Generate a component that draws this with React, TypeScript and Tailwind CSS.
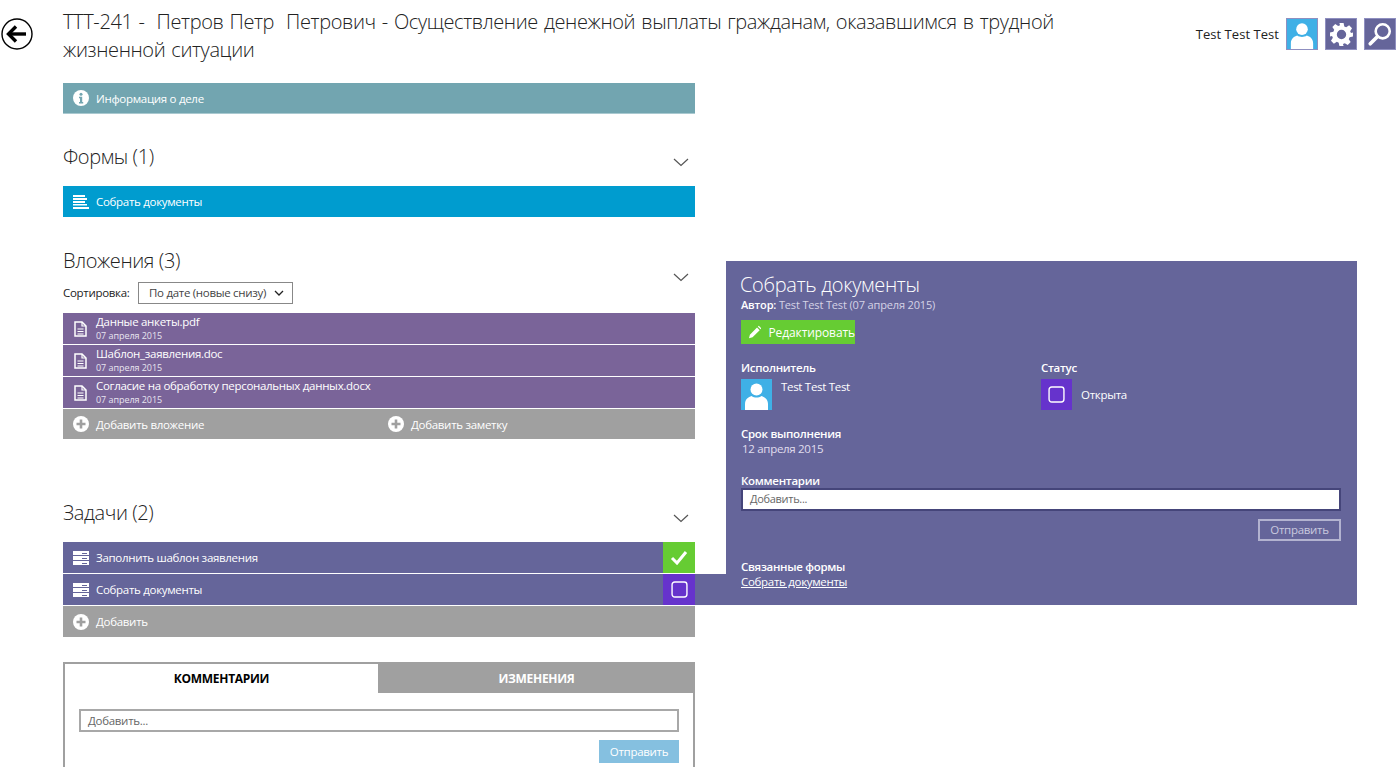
import React from "react";

const sans = "font-['Open_Sans','Noto_Sans',sans-serif]";

function Chevron() {
  return (
    <svg width="16" height="9" viewBox="0 0 16 9" className="block shrink-0">
      <path d="M1 1l7 6.5L15 1" fill="none" stroke="#555" strokeWidth="1.2" />
    </svg>
  );
}

function Plus() {
  return (
    <svg width="16" height="16" viewBox="0 0 16 16" className="shrink-0">
      <circle cx="8" cy="8" r="8" fill="#fff" />
      <path d="M8 3.500v9M3.500 8h9" stroke="#a0a0a0" strokeWidth="2.600" />
    </svg>
  );
}

function Info() {
  return (
    <svg width="16" height="16" viewBox="0 0 16 16" className="shrink-0">
      <circle cx="8" cy="8" r="8" fill="#fff" />
      <circle cx="8" cy="4.200" r="1.500" fill="#72a5b0" />
      <path d="M6 6.800h3.200v5.200h1v1.400H6V12h1V8.200H6z" fill="#72a5b0" />
    </svg>
  );
}

function FormIcon() {
  return (
    <svg width="16" height="14" viewBox="0 0 16 14" className="shrink-0">
      <path d="M0 0h12v2H0zM0 3h14v2H0zM0 6h12v2H0zM0 9h14v1.500H0zM0 12h16v2H0z" fill="#fff" />
    </svg>
  );
}

function TaskIcon() {
  return (
    <svg width="16" height="14" viewBox="0 0 16 14" className="shrink-0">
      <path d="M0 0h16v4H0zM0 5h16v4H0zM0 10h16v4H0z" fill="#fff" />
      <path d="M9 2h5v1H9zM9 7h5v1H9zM9 12h5v1H9z" fill="#65659a" />
    </svg>
  );
}

function DocIcon() {
  return (
    <svg width="13" height="16" viewBox="0 0 13 16" className="shrink-0">
      <path d="M1 1h7l4 4v10H1z" fill="none" stroke="#fff" strokeWidth="1.500" />
      <path d="M8 1v4h4M3.500 8h6M3.500 10.500h6M3.500 13h6" fill="none" stroke="#fff" strokeWidth="1.200" />
    </svg>
  );
}

function Avatar({ size }: { size: string }) {
  return (
    <svg viewBox="0 0 31 31" className={`${size} block shrink-0`}>
      <rect width="31" height="31" fill="#3fb0e6" />
      <circle cx="15.500" cy="10.500" r="6" fill="#fff" />
      <path d="M4 31v-6c0-5 3.500-7 6.500-8 3 2 7 2 10 0 3 1 6.500 3 6.500 8v6z" fill="#fff" />
    </svg>
  );
}

function Square({ size }: { size: number }) {
  return (
    <svg width={size} height={size} viewBox="0 0 16 16" className="block">
      <rect x="1" y="1" width="14" height="14" rx="2.500" fill="none" stroke="#fff" strokeWidth="1.300" />
    </svg>
  );
}

function Row({ bg, icon, children, right }: { bg: string; icon: React.ReactNode; children: React.ReactNode; right?: React.ReactNode }) {
  return (
    <div className={`${bg} h-[31px] flex items-center text-white text-[11.5px] mb-px`}>
      <div className="w-[33px] pl-[10px] flex items-center">{icon}</div>
      <div className="flex-1 pt-[1px]">{children}</div>
      {right}
    </div>
  );
}

function FileRow({ name }: { name: string }) {
  return (
    <div className="bg-[#7a6499] h-[31px] flex items-center text-white mb-px">
      <div className="w-[33px] pl-[11px] flex items-center"><DocIcon /></div>
      <div className="flex flex-col">
        <span className="text-[11.5px] leading-[14px]">{name}</span>
        <span className="text-[9px] leading-[13px] tracking-[-0.05px] text-[#e8e4f0]">07 апреля 2015</span>
      </div>
    </div>
  );
}

function SectionHead({ title, className, chevron }: { title: string; className: string; chevron: string }) {
  return (
    <div className={`flex justify-between h-[28px] ${className}`}>
      <h2 className="text-[20px] leading-[28px] font-light text-[#222] tracking-[-0.4px]">{title}</h2>
      <div className={`mr-[6px] ${chevron}`}><Chevron /></div>
    </div>
  );
}

export default function App() {
  return (
    <div className={`${sans} h-screen overflow-hidden bg-white text-[#222] tracking-[-0.3px] flex flex-col`}>
      <header className="flex items-start pt-[8px] pr-[4px]">
        <div className="w-[63px] pl-[1px] pt-[10px] shrink-0">
          <svg width="32" height="32" viewBox="0 0 32 32" className="block">
            <circle cx="16" cy="16" r="15" fill="#fff" stroke="#000" strokeWidth="1.400" />
            <path d="M7 16h18" stroke="#000" strokeWidth="3.400" />
            <path d="M15 8.500L7.500 16l7.500 7.500" fill="none" stroke="#000" strokeWidth="3.400" />
          </svg>
        </div>
        <h1 className="w-[1010px] text-[20px] leading-[28px] font-light text-[#222] whitespace-pre-wrap tracking-[-0.38px] [word-spacing:1.2px]">
          {"ТТТ-241 -  Петров Петр  Петрович - Осуществление денежной выплаты гражданам, оказавшимся в трудной жизненной ситуации"}
        </h1>
        <div className="ml-auto flex items-center gap-[7px] pt-[10px]">
          <span className="text-[13px] tracking-[0.05px] pt-[2px]">Test Test Test</span>
          <div className="w-[32px] h-[32px] border border-[#8f8fc0]"><Avatar size="w-full h-full" /></div>
          <div className="w-[32px] h-[32px] bg-[#65659a] border border-[#8f8fc0] flex items-center justify-center">
            <svg width="25" height="25" viewBox="0 0 24 24">
              <path fill="#fff" fillRule="evenodd" d="M10 1h4l.7 3.200 1.800.8 2.800-1.800 2.800 2.800-1.800 2.800.8 1.800L23 10v4l-3.200.7-.8 1.800 1.800 2.800-2.800 2.800-2.800-1.800-1.800.8L14 23h-4l-.7-3.200-1.800-.8-2.800 1.800-2.800-2.800 1.800-2.800-.8-1.800L1 14v-4l3.200-.7.8-1.800L3.200 4.700 6 2l2.800 1.800 1.800-.8zM12 7.500a4.500 4.500 0 100 9 4.500 4.500 0 000-9z" />
            </svg>
          </div>
          <div className="w-[32px] h-[32px] bg-[#65659a] border border-[#8f8fc0] flex items-center justify-center">
            <svg width="26" height="26" viewBox="0 0 24 24">
              <circle cx="14.500" cy="9.500" r="6.500" fill="none" stroke="#fff" strokeWidth="2.400" />
              <path d="M9.500 14.500L3 21" stroke="#fff" strokeWidth="3.400" strokeLinecap="round" />
            </svg>
          </div>
        </div>
      </header>

      <div className="flex items-start pl-[63px]">
        <main className="w-[632px] shrink-0">
          <div className="mt-[19px] h-[31px] bg-[#72a5b0] border-b border-[#a9c9d0] flex items-center text-white text-[11.5px]">
            <div className="w-[33px] pl-[10px] flex items-center"><Info /></div>
            <span className="pt-[1px]">Информация о деле</span>
          </div>

          <SectionHead title="Формы (1)" className="mt-[29px]" chevron="mt-[15px]" />
          <div className="mt-[15px]">
            <Row bg="bg-[#009ccf]" icon={<FormIcon />}>Собрать документы</Row>
          </div>

          <SectionHead title="Вложения (3)" className="mt-[30px]" chevron="mt-[26px]" />
          <div className="flex items-center mt-[7px] text-[11.5px] h-[22px]">
            <span className="w-[75px]">Сортировка:</span>
            <div className="w-[155px] h-[22px] border border-[#888] flex items-center justify-between pl-[10px] pr-[8px] text-[#444] whitespace-nowrap">
              По дате (новые снизу)
              <svg width="10" height="7" viewBox="0 0 10 7"><path d="M1 1l4 4 4-4" fill="none" stroke="#222" strokeWidth="1.300" /></svg>
            </div>
          </div>
          <div className="mt-[9px]">
            <FileRow name="Данные анкеты.pdf" />
            <FileRow name="Шаблон_заявления.doc" />
            <FileRow name="Согласие на обработку персональных данных.docx" />
            <div className="bg-[#a0a0a0] h-[30px] flex items-center text-white text-[11.5px]">
              <div className="w-[33px] pl-[10px] flex items-center"><Plus /></div>
              <span className="w-[292px] pt-[1px]">Добавить вложение</span>
              <div className="w-[23px] flex items-center"><Plus /></div>
              <span className="pt-[1px]">Добавить заметку</span>
            </div>
          </div>

          <SectionHead title="Задачи (2)" className="mt-[60px]" chevron="mt-[15px]" />
          <div className="mt-[15px]">
            <Row
              bg="bg-[#65659a]"
              icon={<TaskIcon />}
              right={
                <div className="w-[32px] h-[31px] bg-[#66cc33] flex items-center justify-center">
                  <svg width="18" height="15" viewBox="0 0 18 15"><path d="M2 8l5 5L16 2" fill="none" stroke="#fff" strokeWidth="3" /></svg>
                </div>
              }
            >
              Заполнить шаблон заявления
            </Row>
            <Row
              bg="bg-[#65659a]"
              icon={<TaskIcon />}
              right={<div className="w-[32px] h-[31px] bg-[#6633cc] flex items-center justify-center"><Square size={17} /></div>}
            >
              Собрать документы
            </Row>
            <Row bg="bg-[#a0a0a0]" icon={<Plus />}>Добавить</Row>
          </div>

          <div className="mt-[25px] border-x-2 border-t-2 border-[#a0a0a0] h-[200px]">
            <div className="flex h-[29px] text-[12px] font-bold -mr-[2px]">
              <div className="w-[313px] flex items-center justify-center text-black">КОММЕНТАРИИ</div>
              <div className="flex-1 bg-[#a0a0a0] text-white flex items-center justify-center">ИЗМЕНЕНИЯ</div>
            </div>
            <div className="mx-[14px] mt-[16px] h-[23px] border-2 border-[#a8a8a8] flex items-center px-[7px] text-[11.5px] text-[#666]">Добавить...</div>
            <div className="flex justify-end mr-[14px] mt-[8px]">
              <div className="w-[80px] h-[23px] bg-[#85c0e0] text-white text-[11.5px] flex items-center justify-center">Отправить</div>
            </div>
          </div>
        </main>

        <aside className="relative w-[631px] h-[344px] ml-[31px] mt-[197px] shrink-0 bg-[#65659a] text-white pl-[15px] pr-[16px] flex flex-col">
          <div className="absolute -left-[31px] bottom-0 w-[31px] h-[31px] bg-[#65659a]" />
          <h3 className="-ml-px mt-[10px] text-[20px] leading-[28px] font-light">Собрать документы</h3>
          <div className="text-[11px] leading-[15px] -mt-[2px] text-[#d5d3e6] tracking-[-0.15px]"><b className="font-semibold text-white">Автор:</b> Test Test Test (07 апреля 2015)</div>
          <div className="mt-[8px] w-[114px] h-[24px] bg-[#66cc33] flex items-center text-[12px] tracking-[-0.1px]">
            <svg width="14" height="14" viewBox="0 0 14 14" className="ml-[8px] mr-[7px]"><path d="M0 14l1-4L9 2l3 3-8 8zM10 1l1-1 3 3-1 1z" fill="#fff" /></svg>
            <span className="pt-[1px]">Редактировать</span>
          </div>
          <div className="flex mt-[16px]">
            <div className="w-[300px]">
              <div className="text-[11.5px] leading-[16px] font-semibold">Исполнитель</div>
              <div className="flex mt-[3px]">
                <Avatar size="w-[31px] h-[31px]" />
                <span className="ml-[9px] text-[11.5px] leading-[16px]">Test Test Test</span>
              </div>
            </div>
            <div>
              <div className="text-[11.5px] leading-[16px] font-semibold">Статус</div>
              <div className="flex items-center mt-[3px]">
                <div className="w-[31px] h-[31px] bg-[#6633cc] flex items-center justify-center"><Square size={17} /></div>
                <span className="ml-[9px] text-[11.5px]">Открыта</span>
              </div>
            </div>
          </div>
          <div className="text-[11.5px] leading-[16px] font-semibold mt-[16px]">Срок выполнения</div>
          <div className="text-[11.5px] leading-[15px] text-[#e0deee] ml-px -mt-[1px]">12 апреля 2015</div>
          <div className="text-[11.5px] leading-[15px] font-semibold mt-[17px]">Комментарии</div>
          <div className="h-[23px] bg-white border-2 border-[#45457a] flex items-center px-[7px] text-[11px] text-[#666]">Добавить...</div>
          <div className="flex justify-end mt-[8px]">
            <div className="w-[83px] h-[22px] border-2 border-[#b3b3d0] text-[#c9c9df] text-[11.5px] flex items-center justify-center">Отправить</div>
          </div>
          <div className="text-[11.5px] leading-[16px] font-semibold mt-[18px]">Связанные формы</div>
          <div className="text-[11.5px] leading-[14px] underline">Собрать документы</div>
        </aside>
      </div>
    </div>
  );
}
